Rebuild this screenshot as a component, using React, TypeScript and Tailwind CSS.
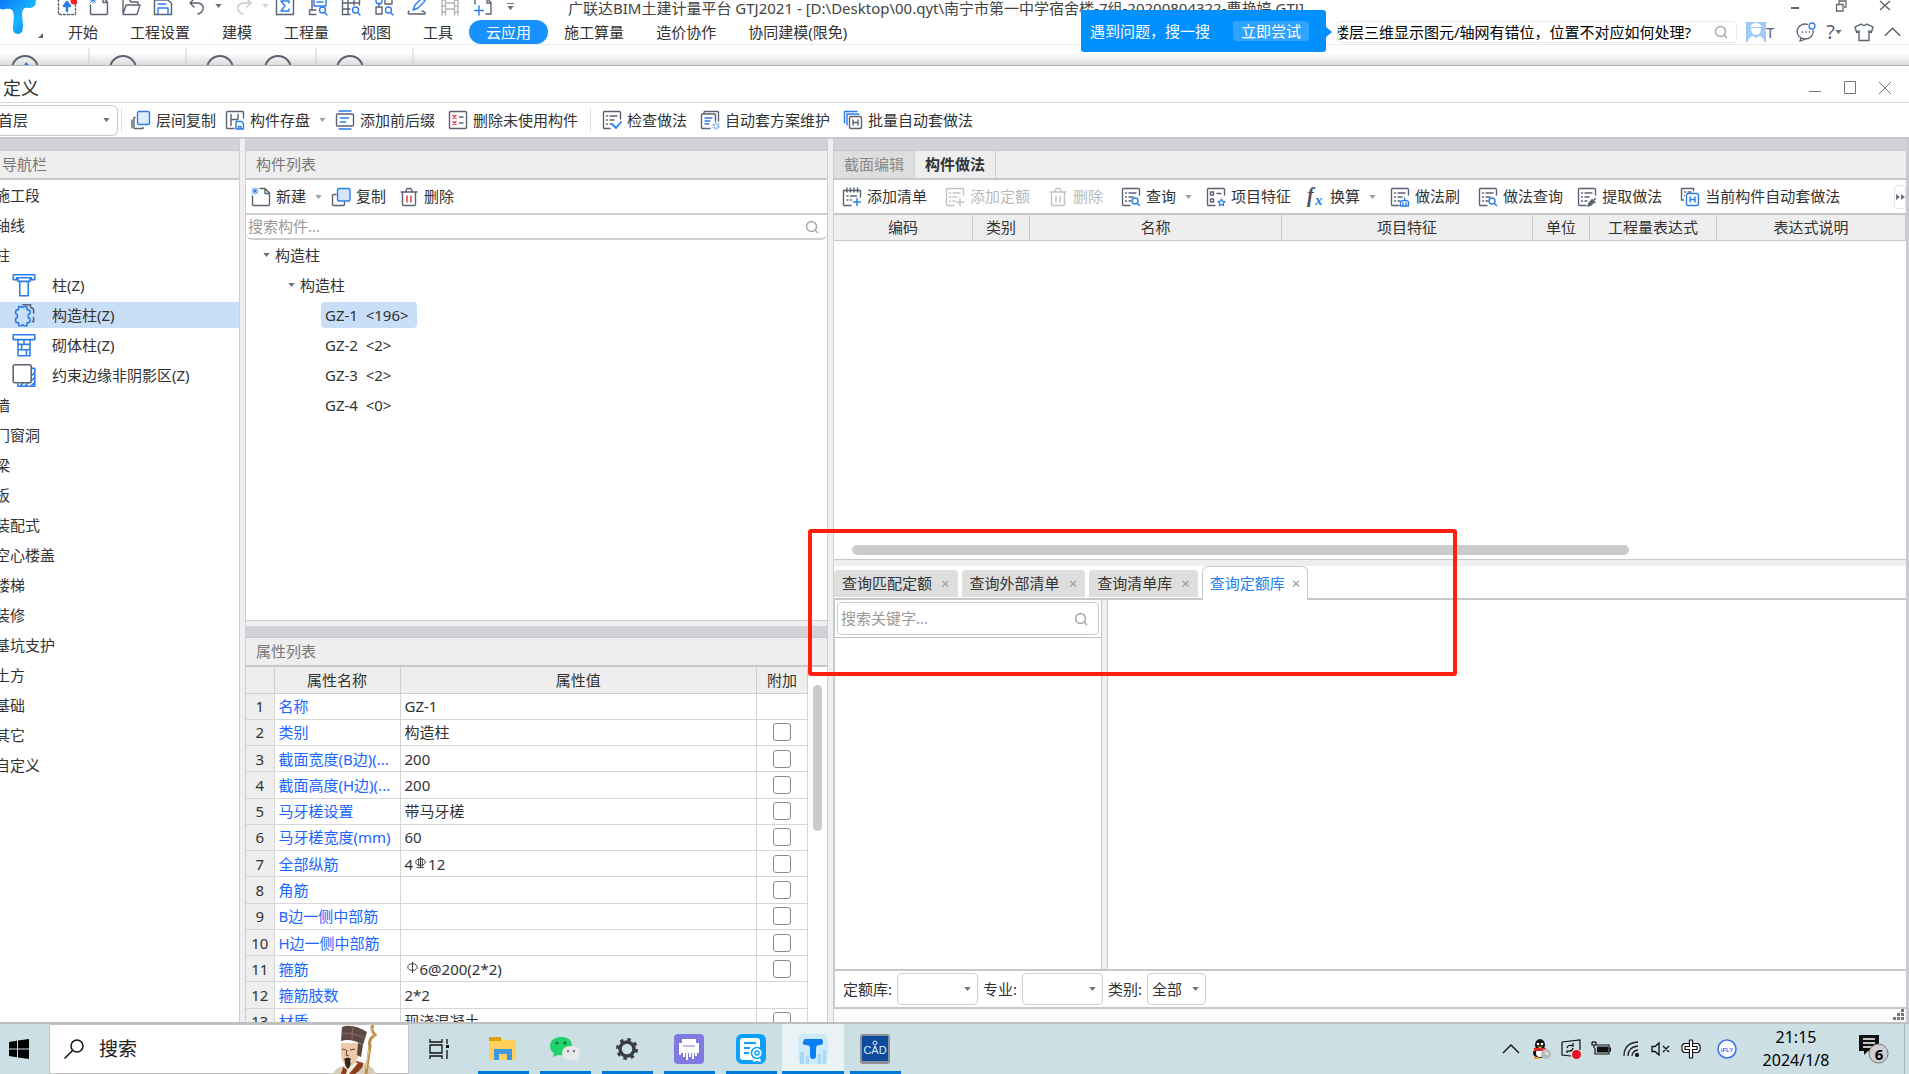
import React from "react";

const D = "#5b6272";
const B = "#2b7de9";

type P = { children: React.ReactNode; size?: string; stroke?: string; w?: number };
function Svg({ children, size = "size-5", stroke = D, w = 1.4 }: P) {
  return (
    <svg viewBox="0 0 20 20" className={`${size} shrink-0`} fill="none" stroke={stroke} strokeWidth={w} strokeLinecap="round" strokeLinejoin="round" aria-hidden="true">
      {children}
    </svg>
  );
}

const Lines = () => <path d="M4.500 6h1M8 6h7M4.500 10h1M8 10h4M4.500 14h1M8 14h2" />;
const Doc = () => <path d="M9 18.500H2.500a1 1 0 0 1-1-1v-15a1 1 0 0 1 1-1h15a1 1 0 0 1 1 1V8" />;

const icons = {
  layers: (
    <Svg>
      <path d="M4 7.500H3v10a1 1 0 0 0 1 1h8v-1M1 10v8" />
      <rect x="6.500" y="1.500" width="12" height="13" rx="1.500" fill="#deecfd" stroke={B} />
    </Svg>
  ),
  store: (
    <Svg>
      <Doc />
      <path d="M6 4.500v11M6 9.500h7M13 4.500v4" />
      <path d="M11 11.500h5.500l2 2v5.500H11zM13.500 19v-2.500h2.500V19" stroke={B} />
    </Svg>
  ),
  affix: (
    <Svg>
      <rect x="1.500" y="4" width="17" height="12" rx="1" />
      <path d="M4 1h12M4 19h12M5.500 8h8M5.500 12h5" stroke={B} />
    </Svg>
  ),
  purge: (
    <Svg>
      <rect x="1.500" y="1.500" width="17" height="17" rx="1" />
      <path d="m5 5.500 3 3m0-3-3 3M5 11.500l3 3m0-3-3 3" stroke="#e5343d" />
      <path d="M11.500 7H15M11.500 13H15" />
    </Svg>
  ),
  check: (
    <Svg>
      <path d="M8 18.500H2.500a1 1 0 0 1-1-1v-15a1 1 0 0 1 1-1h15a1 1 0 0 1 1 1V9" />
      <Lines />
      <path d="m10.500 14.500 3.500 3.500 5-6" stroke={B} strokeWidth="1.800" />
    </Svg>
  ),
  scheme: (
    <Svg>
      <path d="M4 4V2.500a1 1 0 0 1 1-1h12.500a1 1 0 0 1 1 1V11M10 18.500H2.500a1 1 0 0 1-1-1V5a1 1 0 0 1 1-1h12a1 1 0 0 1 1 1v6" />
      <path d="M5 8h7M5 11h5M5 14h4" stroke={B} />
      <circle cx="16" cy="16" r="2.500" stroke="#7fb1f5" strokeWidth="2.500" strokeDasharray="1.600 1" strokeLinecap="butt" />
    </Svg>
  ),
  batch: (
    <Svg>
      <path d="M1.500 13V1.500H14M4 15V4h12" stroke={B} />
      <rect x="6.500" y="6.500" width="12" height="12" rx="1.500" fill="#fff" />
      <path d="M10 10v5M15 10v5M10 12.500h5" />
    </Svg>
  ),
  current: (
    <Svg stroke={B}>
      <path d="M3.500 13h-2V1.500h12v2" stroke={D} />
      <path d="M4.500 5h1M8 5h3M4.500 8.500h0" stroke={D} />
      <rect x="6.500" y="6.500" width="12" height="12" rx="1.500" />
      <path d="M10 10v5M15 10v5M10 12.500h5" />
    </Svg>
  ),
  fresh: (
    <Svg>
      <path d="M1.500 9v8.500a1 1 0 0 0 1 1h15a1 1 0 0 0 1-1V6l-4.500-4.500H9M14 2v4.500h4" />
      <path d="m1.500 1.500 5 5m0-5-5 5M4 1v6M1 4h6" stroke={B} strokeWidth="1" />
    </Svg>
  ),
  copy: (
    <Svg>
      <path d="M5 7.500H2.500a1 1 0 0 0-1 1v9a1 1 0 0 0 1 1h10a1 1 0 0 0 1-1V15" />
      <rect x="6.500" y="1.500" width="12.500" height="12.500" rx="1.500" fill="#d6e6fb" stroke={B} />
    </Svg>
  ),
  trash: (
    <Svg>
      <path d="M2 5h16M6.500 5 8 1.500h4L13.500 5M3.500 5v12.500a1 1 0 0 0 1 1h11a1 1 0 0 0 1-1V5" />
      <path d="M8 9v6M12 9v6" stroke="#e5343d" />
    </Svg>
  ),
  trashOff: (
    <Svg stroke="#c3c3c3">
      <path d="M2 5h16M6.500 5 8 1.500h4L13.500 5M3.500 5v12.500a1 1 0 0 0 1 1h11a1 1 0 0 0 1-1V5" />
      <path d="M8 9v6M12 9v6" />
    </Svg>
  ),
  addList: (
    <Svg>
      <path d="M9 18.500H2.500a1 1 0 0 1-1-1V3.500h17V10M5 1v4M8.500 1v4M12 1v4M15.500 1v4M5 9h1M8.500 9h6M5 13h1M8.500 13h1" />
      <path d="M15 11.500v7M11.500 15h7" stroke={B} />
    </Svg>
  ),
  addQuota: (
    <Svg stroke="#c3c3c3">
      <Doc />
      <Lines />
      <path d="M15 11.500v7M11.500 15h7" />
    </Svg>
  ),
  query: (
    <Svg>
      <Doc />
      <Lines />
      <circle cx="14" cy="14" r="3" stroke={B} />
      <path d="m16.500 16.500 2 2" stroke={B} />
    </Svg>
  ),
  feature: (
    <Svg>
      <Doc />
      <path d="M4.500 5h3v3h-3zM4.500 12h3v3h-3zM11 6.500h4" />
      <path d="m15.500 12 1 2.200 2.500.3-1.800 1.700.4 2.500-2.100-1.200-2.100 1.200.4-2.500-1.800-1.700 2.500-.3z" stroke={B} strokeWidth="1.200" />
    </Svg>
  ),
  brush: (
    <Svg>
      <Doc />
      <Lines />
      <path d="M14.500 11v2.500M10.500 15.500a4 2 0 0 1 8 0V19h-8zM13 16v3M16 16v3" stroke={B} />
    </Svg>
  ),
  extract: (
    <Svg>
      <Doc />
      <Lines />
      <path d="m11 19 1-3 3-3 2 2-3 3zM15 12.500l3 3M16.500 13.500l2-2" fill={D} />
    </Svg>
  ),
};

function FxIcon() {
  return (
    <svg viewBox="0 0 20 20" className="size-5 shrink-0" fontFamily="Liberation Serif, serif" fontStyle="italic" fontWeight="700" aria-hidden="true">
      <text x="2" y="15" fontSize="20" fill="#4b5160">f</text>
      <text x="10" y="18" fontSize="15" fill={B}>x</text>
    </svg>
  );
}

function Caret({ cls = "text-gray-500" }: { cls?: string }) {
  return (
    <svg viewBox="0 0 8 5" className={`h-[4px] w-[7px] shrink-0 ${cls}`} fill="currentColor" aria-hidden="true">
      <path d="M0 0h8L4 5z" />
    </svg>
  );
}

function Tool({ icon, label, caret, off }: { icon: React.ReactNode; label: string; caret?: boolean; off?: boolean }) {
  return (
    <button disabled={off} className={`flex shrink-0 items-center gap-[5px] whitespace-nowrap ${off ? "text-[#b9b9b9]" : ""}`}>
      {icon}
      <span>{label}</span>
      {caret && <span className="ml-[4px]"><Caret cls="text-gray-400" /></span>}
    </button>
  );
}

function Mag({ cls = "size-[14px]" }: { cls?: string }) {
  return (
    <svg viewBox="0 0 14 14" className={`${cls} shrink-0 text-[#a8a8a8]`} fill="none" stroke="currentColor" strokeWidth="1.500" aria-hidden="true">
      <circle cx="6.500" cy="6.500" r="5" />
      <path d="m10 10 3 3" />
    </svg>
  );
}

function AppLogo() {
  return (
    <svg viewBox="0 0 48 44" className="h-11 w-12 shrink-0" aria-hidden="true">
      <defs>
        <linearGradient id="lg" x1="0" y1="0" x2="1" y2="1">
          <stop offset="0" stopColor="#0a6cf0" />
          <stop offset=".6" stopColor="#16b4ff" />
          <stop offset="1" stopColor="#0a7cf5" />
        </linearGradient>
      </defs>
      <path d="M-2-6h33q5 0 5 6 0 9-8 8-5-1-6 5l1 13q0 8-5 8-6 0-5-8 2-13-1-16-2-2-7-1-6 2-7-4z" fill="url(#lg)" />
      <path d="M43 33v5h-5z" fill="#666" />
    </svg>
  );
}

function QuickAccess() {
  return (
    <div className="-mt-1 flex items-center">
      <div className="flex gap-3 pl-[9px]">
        <Svg><path d="M1.500 1.500h17v17h-17z" strokeDasharray="2 2" /><path d="M10 15V9M7 10l3-4 3 4z" stroke={B} fill={B} strokeWidth="2.500" /><circle cx="17" cy="5" r="3.500" fill="#f5222d" stroke="none" /></Svg>
        {icons.fresh}
        <Svg><path d="M2 17V3h6l2 3h7v3M2 18.500 5 9h14l-3 9.500z" /></Svg>
        <Svg><path d="M1.500 4h13l4 3v11.500h-17z" /><path d="M5 18v-6h10v6M5 8h8" stroke={B} /></Svg>
      </div>
      <div className="flex items-center gap-2 pl-[14px]">
        <Svg><path d="M7 3 3 7l4 4M3 7h8q6 1 5 6-1 4-5 5" /></Svg>
        <Caret />
      </div>
      <div className="flex items-center gap-2 pl-3">
        <Svg stroke="#c8c8c8"><path d="m13 3 4 4-4 4M17 7H9q-6 1-5 6 1 4 5 5" /></Svg>
        <Caret cls="text-gray-300" />
      </div>
      <div className="flex gap-[13px] pl-[6px]">
        <Svg><path d="M1.500 1.500h17v17h-17z" /><path d="M14 7V5H6l4 5-4 5h8v-2" stroke={B} /></Svg>
        <Svg><path d="M4 1v13M1.500 14v4.500H8M1.500 14H8" /><path d="M6 2h12v8H6zM9 6h6" stroke={B} /><circle cx="14.500" cy="14" r="3" stroke={B} /><path d="m17 17 2 2" stroke={B} /></Svg>
        <Svg><path d="M1.500 1.500h17V9M1.500 1.500v17H9M1.500 7h17M1.500 13H9M7 1.500v17M13 1.500V9" /><circle cx="14.500" cy="14" r="3" stroke={B} /><path d="m17 17 2 2" stroke={B} /></Svg>
        <Svg><path d="M2 11h6v7H2zM11 3h7v5h-7zM5 11V7" /><circle cx="5" cy="5" r="3" stroke={B} /><circle cx="14.500" cy="14" r="3" stroke={B} /><path d="m17 17 2 2" stroke={B} /></Svg>
        <Svg><path d="M2 15q-2 3 1 3h15q1-2-3-3" /><path d="m6 14 2-5 7-7 3 3-7 7z" stroke={B} /></Svg>
        <Svg stroke="#b5b5b5"><path d="M2 1v18M18 1v18M5.500 1v18M14.500 1v18M5.500 7h9M5.500 13h9M2 4h3M2 10h3M2 16h3M15 4h3M15 10h3M15 16h3" /></Svg>
        <Svg><path d="M2 8V2h4M10 2h4l4 5v11h-5M14 2v5h4" /><path d="M6 10v9M1.500 14.500h9" stroke={B} /></Svg>
      </div>
      <div className="flex flex-col gap-[2px] pl-[14px] text-gray-500">
        <span className="h-px w-[7px] bg-gray-500" />
        <Caret />
      </div>
    </div>
  );
}

const menu = ["开始", "工程设置", "建模", "工程量", "视图", "工具", "云应用", "施工算量", "造价协作", "协同建模(限免)"];

function MainWindow() {
  return (
    <header className="relative shrink-0 bg-white">
      <div className="flex h-[45px] overflow-hidden border-b border-[#ececec]">
        <AppLogo />
        <div className="flex min-w-0 flex-1 flex-col">
          <div className="flex h-[21px] items-start">
            <QuickAccess />
            <h1 className="ml-[54px] text-[15px] leading-4 whitespace-nowrap text-[#444]">
              广联达BIM土建计量平台 GTJ2021 - [D:\Desktop\00.qyt\南宁市第一中学宿舍楼-7组-20200804322-曹艳婷.GTJ]
            </h1>
            <div className="ml-auto flex gap-8 pr-[18px] text-[#666]">
              <button aria-label="最小化" className="flex h-4 w-3 items-center"><span className="h-[2px] w-2 bg-[#666]" /></button>
              <button aria-label="还原"><svg viewBox="0 0 12 16" className="h-4 w-3" fill="none" stroke="currentColor" strokeWidth="1.300"><path d="M4 4V1h7v6H9M1.500 4.500H8v6.500H1.500z" /></svg></button>
              <button aria-label="关闭"><svg viewBox="0 0 12 16" className="h-4 w-3" fill="none" stroke="currentColor" strokeWidth="1.500"><path d="m1 1 10 9M11 1 1 10" /></svg></button>
            </div>
          </div>
          <nav className="flex h-6 items-center pl-1">
            {menu.map((m) => (
              <button key={m} className={`h-6 rounded-full leading-6 whitespace-nowrap ${m === "云应用" ? "bg-[#1890ff] px-[17px] text-white" : "px-4"}`}>{m}</button>
            ))}
            <div className="ml-auto flex items-center pr-2 text-[#5b6272]">
              <label className="flex h-[22px] w-[400px] items-center rounded-sm border border-[#e8e8e8] pr-2">
                <input aria-label="搜索帮助" className="min-w-0 flex-1 -indent-[4px] text-black outline-none" defaultValue="楼层三维显示图元/轴网有错位，位置不对应如何处理?" />
                <Mag />
              </label>
              <svg viewBox="0 0 20 20" className="ml-[9px] size-5" aria-hidden="true"><path d="M0 0h20v20H0z" fill="#9fcbfb" /><path d="M2 20q0-5 5-6l3 2 3-2q5 1 5 6zM5 6h10q0 7-5 7T5 6zM4 5q2-4 6-4t6 4z" fill="#fff" /></svg>
              <span>T</span>
              <svg viewBox="0 0 20 20" className="ml-[22px] size-5" fill="none" stroke={D} strokeWidth="1.300" aria-hidden="true"><path d="M12 2.500A8 7.500 0 1 0 17 8M5 16l-1 3 5-1.500" /><path d="M6 10h1M9.500 10h1M13 10h1" strokeWidth="1.800" /><circle cx="16" cy="4" r="3" stroke={B} /></svg>
              <span className="ml-[10px] text-[20px] leading-5">?</span>
              <Caret />
              <svg viewBox="0 0 20 20" className="ml-3 size-5" fill="none" stroke={D} strokeWidth="1.400" aria-hidden="true"><path d="M7 2q3 3 6 0l6 3-1.500 5-2.500-1v9.500H5V9L2.500 10 1 5z" /></svg>
              <svg viewBox="0 0 18 10" className="ml-[10px] h-[10px] w-[17px]" fill="none" stroke={D} strokeWidth="1.600" aria-hidden="true"><path d="m1 9 8-8 8 8" /></svg>
            </div>
          </nav>
        </div>
      </div>
      <div className="h-5 overflow-hidden bg-linear-to-b from-white from-40% to-[#dcdcdc]">
        <svg viewBox="0 0 430 20" className="h-5 w-[430px]" fill="none" aria-hidden="true">
          <path d="M89 3v17M186 3v17M316 3v17M413 3v17" stroke="#d0d0d0" />
          <g stroke={D} strokeWidth="2"><circle cx="25" cy="24" r="13" /><circle cx="123" cy="24" r="13" /><circle cx="220" cy="24" r="13" /><circle cx="278" cy="24" r="13" /><circle cx="350" cy="24" r="13" /></g>
          <path d="m24 20 2-3 3 3z" fill={B} />
        </svg>
      </div>
      <div className="absolute top-[10px] right-[583px] flex h-[42px] w-[245px] rounded-[3px] bg-[#0090ff] pt-[11px] pl-[9px] text-white">
        <span className="leading-5">遇到问题，搜一搜</span>
        <button className="ml-[23px] h-5 rounded-[3px] bg-[#2fa3ff] px-2 leading-5">立即尝试</button>
        <svg viewBox="0 0 7 12" className="absolute top-4 -right-[6px] h-3 w-[7px]" fill="#0090ff" aria-hidden="true"><path d="M0 0l7 6-7 6z" /></svg>
      </div>
    </header>
  );
}

function Splitter() {
  return <div className="w-[6px] shrink-0 border-r border-[#cfcfcf] bg-[#efefef]" />;
}

function PanelHead({ title, pad }: { title: string; pad: string }) {
  return (
    <>
      <div className="h-3 shrink-0 border-b border-[#c6c8cc] bg-[#d2d3d9]" />
      <h2 className={`h-[29px] shrink-0 border-b-2 border-[#c6c9cc] bg-[#eee] leading-[27px] text-[#777] ${pad}`}>{title}</h2>
    </>
  );
}

const navIcons = {
  col: <Svg size="size-6" stroke={B} w={1.3}><path d="M1 1.500h18v4h-3v-1.500H4v1.500H1zM5 4v3h10V4M6.500 7v12h7V7" /></Svg>,
  gz: <Svg size="size-6" stroke={B} w={1.3}><path d="M5.500 3h2.500q1 1.500 2 0h2.500v2.500q2.500 0 2.500 2v1.500q-1.500 0-1.500 2t1.500 2v2q0 1.500-2.500 1.500V19H10q-1-1.500-2 0H5.500v-2.500Q3 16.500 3 15v-2q1.500 0 1.500-2T3 9V7.500q0-2 2.500-2z" /><path d="M9 1.500h6.500V4q2.500 0 2.500 2v2.500M18 12v3.500h-1" stroke={D} /></Svg>,
  qt: <Svg size="size-6" stroke={B} w={1.3}><path d="M1 1.500h18v4H1zM5 5.500V19h10V5.500M5 9.500h10M5 14h10M10 5.500v4M8 9.500V14M12 14v5" /></Svg>,
  ys: <Svg size="size-6" stroke={B} w={1.3}><path d="M17 4.500h2v15H5v-2M19 8l-2 2M19 12l-2 2M19 16l-3 3M13 17l-2 2M9 17l-2 2" /><rect x="1" y="1.500" width="15" height="15" rx="1.500" stroke={D} fill="#fff" /></Svg>,
};

const navBefore = ["施工段", "轴线", "柱"];
const navAfter = ["墙", "门窗洞", "梁", "板", "装配式", "空心楼盖", "楼梯", "装修", "基坑支护", "土方", "基础", "其它", "自定义"];

function NavPanel() {
  return (
    <aside className="flex w-[240px] shrink-0 flex-col border-r border-[#cfcfcf] bg-white">
      <PanelHead title="导航栏" pad="pl-[2px]" />
      <ul className="overflow-hidden">
        {navBefore.map((n) => <li key={n} className="-ml-[5px] h-[30px] leading-[30px]">{n}</li>)}
        {([["col", "柱(Z)"], ["gz", "构造柱(Z)"], ["qt", "砌体柱(Z)"], ["ys", "约束边缘非阴影区(Z)"]] as const).map(([k, n]) => (
          <li key={k} className="py-[2px]">
            <div className={`flex h-[26px] items-center gap-4 pl-3 ${k === "gz" ? "bg-[#c9dff8]" : ""}`}>
              {navIcons[k]}
              {n}
            </div>
          </li>
        ))}
        {navAfter.map((n) => <li key={n} className="-ml-[5px] h-[30px] leading-[30px]">{n}</li>)}
      </ul>
    </aside>
  );
}

function Rebar({ ribbed }: { ribbed?: boolean }) {
  return (
    <svg viewBox="0 0 14 14" className="mx-px inline-block size-[13px] -translate-y-[3px]" fill="none" stroke="#333" aria-hidden="true">
      <ellipse cx="7" cy="6.500" rx="5" ry="3.500" />
      <path d={ribbed ? "M7 1v12M5 3v8M9 3v8M3 12.500h8" : "M7 1v12"} />
    </svg>
  );
}

const props: [string, React.ReactNode, boolean][] = [
  ["名称", "GZ-1", false],
  ["类别", "构造柱", true],
  ["截面宽度(B边)(...", "200", true],
  ["截面高度(H边)(...", "200", true],
  ["马牙槎设置", "带马牙槎", true],
  ["马牙槎宽度(mm)", "60", true],
  ["全部纵筋", <>4<Rebar ribbed />12</>, true],
  ["角筋", "", true],
  ["B边一侧中部筋", "", true],
  ["H边一侧中部筋", "", true],
  ["箍筋", <><Rebar />6@200(2*2)</>, true],
  ["箍筋肢数", "2*2", false],
  ["材质", "现浇混凝土", true],
];

function MiddlePanel() {
  return (
    <section className="flex w-[582px] shrink-0 flex-col border-r border-[#cfcfcf] bg-[#efefef]">
      <div className="flex h-[482px] shrink-0 flex-col border-b border-[#cfcfcf] bg-white">
        <PanelHead title="构件列表" pad="pl-[10px]" />
        <div className="flex h-[35px] shrink-0 items-center gap-[13px] border-b-2 border-[#cfcfcf] pl-[5px]">
          <Tool icon={icons.fresh} label="新建" caret />
          <span className="-ml-1"><Tool icon={icons.copy} label="复制" /></span>
          <Tool icon={icons.trash} label="删除" />
        </div>
        <label className="flex h-[25px] shrink-0 items-center rounded-md border-b-2 border-[#cfcfcf] pr-2 pl-[2px]">
          <input aria-label="搜索构件" placeholder="搜索构件..." className="flex-1 outline-none placeholder:text-[#999]" />
          <Mag />
        </label>
        <ul className="leading-[30px]">
          <li className="flex items-center gap-[3px] pl-[17px]"><Caret cls="text-gray-500" /><span className="pl-[2px]">构造柱</span></li>
          <li className="flex items-center gap-[3px] pl-[42px]"><Caret cls="text-gray-500" /><span className="pl-[2px]">构造柱</span></li>
          {["GZ-1  <196>", "GZ-2  <2>", "GZ-3  <2>", "GZ-4  <0>"].map((g, i) => (
            <li key={g} className="flex h-[30px] items-center pl-[75px]">
              <span className={`h-[26px] rounded-sm px-1 leading-[26px] whitespace-pre ${i === 0 ? "bg-[#c9dff8] pr-[8px]" : ""}`}>{g}</span>
            </li>
          ))}
        </ul>
      </div>
      <div className="mt-[5px] flex min-h-0 flex-1 flex-col bg-white">
        <PanelHead title="属性列表" pad="pl-[10px]" />
        <div className="flex min-h-0 flex-1 overflow-hidden">
          <div className="min-w-0 flex-1">
            <table className="h-[368px] w-full table-fixed border-collapse">
              <thead>
                <tr className="h-[26px] bg-[#eee]">
                  <th className="w-7 border border-t-0 border-l-0 border-[#cfcfcf]" aria-label="序号" />
                  <th className="w-[126px] border border-t-0 border-[#cfcfcf] p-0 font-normal">属性名称</th>
                  <th className="border border-t-0 border-[#cfcfcf] p-0 font-normal">属性值</th>
                  <th className="w-[51px] border border-t-0 border-[#cfcfcf] p-0 font-normal">附加</th>
                </tr>
              </thead>
              <tbody>
                {props.map(([n, v, c], i) => (
                  <tr key={n} className="leading-[22px]">
                    <td className="border border-l-0 border-[#d6d6d6] bg-[#eee] p-0 text-center">{i + 1}</td>
                    <td className="overflow-hidden border border-[#d6d6d6] p-0 pl-1 whitespace-nowrap text-[#1a66ff]">{n}</td>
                    <td className="border border-[#d6d6d6] p-0 pl-1">{v}</td>
                    <td className="border border-[#d6d6d6] p-0 text-center">
                      {c && <input type="checkbox" aria-label={`${n} 附加`} className="mx-auto block size-[18px] appearance-none rounded-[3px] border border-[#8c8c8c] bg-white" />}
                    </td>
                  </tr>
                ))}
              </tbody>
            </table>
          </div>
          <div className="w-[19px] shrink-0 px-[5px] pt-[18px]"><div className="h-[146px] rounded-full bg-[#cbcbcb]" /></div>
        </div>
      </div>
    </section>
  );
}

function Drop({ label, value, w }: { label: string; value: string; w: string }) {
  return (
    <label className="flex items-center gap-[5px]">
      {label}
      <span className={`relative flex h-8 items-center rounded border border-[#cfcfcf] ${w}`}>
        <select className="h-full w-full appearance-none pl-1 outline-none"><option>{value}</option></select>
        <span className="pointer-events-none absolute right-[6px]"><Caret /></span>
      </span>
    </label>
  );
}

function RightPanel() {
  const th = "border-r border-b border-[#c9c9c9] p-0 font-normal";
  return (
    <section className="relative flex min-w-0 flex-1 flex-col border-r-[3px] border-[#c9cbce] bg-white">
      <div className="h-3 shrink-0 border-b border-[#c6c8cc] bg-[#d2d3d9]" />
      <div className="flex h-[29px] shrink-0 border-b-2 border-[#c6c9cc] bg-[#eee] leading-[27px]" role="tablist">
        <button role="tab" className="border-r border-[#cfcfcf] bg-[#dedede] px-[10px] text-[#888]">截面编辑</button>
        <button role="tab" className="border-r border-[#cfcfcf] px-[10px] font-bold">构件做法</button>
      </div>
      <div className="flex h-[35px] shrink-0 items-center gap-[18px] border-b-2 border-[#c6c9cc] pl-2">
        <Tool icon={icons.addList} label="添加清单" />
        <Tool icon={icons.addQuota} label="添加定额" off />
        <Tool icon={icons.trashOff} label="删除" off />
        <Tool icon={icons.query} label="查询" caret />
        <span className="-ml-1"><Tool icon={icons.feature} label="项目特征" /></span>
        <span className="-ml-1"><Tool icon={<FxIcon />} label="换算" caret /></span>
        <span className="-ml-1"><Tool icon={icons.brush} label="做法刷" /></span>
        <Tool icon={icons.query} label="做法查询" />
        <span className="-ml-1"><Tool icon={icons.extract} label="提取做法" /></span>
        <Tool icon={icons.current} label="当前构件自动套做法" />
        <button aria-label="更多" className="ml-auto flex h-6 w-3 items-center justify-center rounded border border-[#e4e4e4] text-gray-500">
          <svg viewBox="0 0 9 6" className="h-[6px] w-[9px] shrink-0" fill="currentColor"><path d="M0 0l4 3-4 3zM5 0l4 3-4 3z" /></svg>
        </button>
      </div>
      <div className="flex h-[345px] shrink-0 flex-col justify-between border-b border-[#c6c9cc]">
        <table className="w-full table-fixed border-separate border-spacing-0">
          <thead>
            <tr className="h-[26px] bg-[#eee]">
              <th className={`w-[139px] ${th}`}>编码</th>
              <th className={`w-[57px] ${th}`}>类别</th>
              <th className={`w-[252px] ${th}`}>名称</th>
              <th className={`w-[251px] ${th}`}>项目特征</th>
              <th className={`w-[57px] ${th}`}>单位</th>
              <th className={`w-[127px] ${th}`}>工程量表达式</th>
              <th className={th}>表达式说明</th>
            </tr>
          </thead>
        </table>
        <div className="px-[18px] pb-1"><div className="h-[10px] w-[75%] rounded-full bg-[#cbcbcb]" /></div>
      </div>
      <div className="h-[6px] shrink-0 bg-[#efefef]" />
      <div className="flex h-[34px] shrink-0 items-end gap-1 border-b-2 border-[#c6c9cc]" role="tablist">
        {["查询匹配定额", "查询外部清单", "查询清单库"].map((t) => (
          <button key={t} role="tab" className="mb-px flex h-[27px] items-center gap-[9px] rounded-t bg-[#dedede] px-2">{t}<span className="text-[15px] text-[#999]">×</span></button>
        ))}
        <button role="tab" className="-mb-[2px] flex h-[34px] items-center gap-[7px] rounded-t-md border border-b-0 border-[#c6cad2] bg-white px-[7px] text-[#2080f0]">查询定额库<span className="text-[15px] text-[#999]">×</span></button>
      </div>
      <div className="flex min-h-0 flex-1 border-b-2 border-[#c6c6c6]">
        <div className="w-[267px] shrink-0 border-l border-[#c6c9cc]">
          <div className="border-b border-[#c0c0c0] p-[2px]">
            <label className="flex h-[33px] items-center rounded border border-[#c9c9c9] pr-[10px] pl-[3px]">
              <input aria-label="搜索关键字" placeholder="搜索关键字..." className="min-w-0 flex-1 outline-none placeholder:text-[#999]" />
              <Mag />
            </label>
          </div>
        </div>
        <div className="w-[7px] shrink-0 border-x border-[#c9c9c9] bg-[#efefef]" />
      </div>
      <div className="flex h-[36px] shrink-0 items-center gap-[5px] border-l border-[#c6c9cc] pl-2">
        <Drop label="定额库:" value="" w="w-[81px]" />
        <Drop label="专业:" value="" w="w-[81px]" />
        <Drop label="类别:" value="全部" w="w-[59px]" />
      </div>
      <div className="flex h-[15px] shrink-0 items-end justify-end border-t-2 border-[#c6c9cc] bg-[#fafbfb]">
        <svg viewBox="0 0 12 12" className="m-px size-3" fill="#777" aria-hidden="true"><path d="M8 0h3v3H8zM4 4h3v3H4zM8 4h3v3H8zM0 8h3v3H0zM4 8h3v3H4zM8 8h3v3H8z" /></svg>
      </div>
      <div className="pointer-events-none absolute top-[390px] -left-[26px] h-[147px] w-[649px] rounded-[3px] border-4 border-[#ff2012]" />
    </section>
  );
}

function DefineWindow() {
  return (
    <main className="flex min-h-0 flex-1 flex-col border-t border-b-2 border-t-[#b4b4b4] border-b-[#bdbfc1] bg-white">
      <div className="flex h-[37px] shrink-0 items-center border-b border-[#d3d5da] pr-[17px] pl-[3px]">
        <h2 className="flex-1 pt-2 text-[18px] leading-6">定义</h2>
        <div className="flex gap-[21px] pt-2 text-[#777]">
          <button aria-label="最小化"><svg viewBox="0 0 14 14" className="size-[14px]" stroke="currentColor"><path d="M1 10.500h12" /></svg></button>
          <button aria-label="最大化"><svg viewBox="0 0 14 14" className="size-[14px]" stroke="currentColor" fill="none"><path d="M1.500.5h11v12h-11z" /></svg></button>
          <button aria-label="关闭"><svg viewBox="0 0 14 14" className="size-[14px]" stroke="currentColor"><path d="m1 1 12 12M13 1 1 13" /></svg></button>
        </div>
      </div>
      <div className="flex h-9 shrink-0 items-center gap-[13px] overflow-hidden border-b-2 border-[#c6c9cc]">
        <span className="relative flex h-[31px] w-[118px] shrink-0 items-center rounded-r-md border border-l-0 border-[#c9c9c9]">
          <select aria-label="楼层" className="h-full w-full appearance-none -indent-[2px] outline-none"><option>首层</option></select>
          <span className="pointer-events-none absolute right-[7px]"><Caret /></span>
        </span>
        <span className="-mr-1 -ml-[10px] h-6 w-px bg-[#ddd]" />
        <Tool icon={icons.layers} label="层间复制" />
        <span className="-ml-1"><Tool icon={icons.store} label="构件存盘" caret /></span>
        <span className="-ml-1"><Tool icon={icons.affix} label="添加前后缀" /></span>
        <Tool icon={icons.purge} label="删除未使用构件" />
        <span className="-mr-[2px] -ml-px h-6 w-px bg-[#ddd]" />
        <Tool icon={icons.check} label="检查做法" />
        <Tool icon={icons.scheme} label="自动套方案维护" />
        <Tool icon={icons.batch} label="批量自动套做法" />
      </div>
      <div className="flex min-h-0 flex-1">
        <NavPanel />
        <Splitter />
        <MiddlePanel />
        <Splitter />
        <RightPanel />
      </div>
    </main>
  );
}

function Scholar() {
  return (
    <svg viewBox="0 0 44 49" className="h-[49px] w-11" aria-hidden="true">
      <path d="M0 49q2-6 10-8l18-4q12 3 15 12z" fill="#d9cdb9" />
      <path d="M8 49l2-7 4 3 10-9 6 2q1 5-8 11z" fill="#8c3f1c" />
      <path d="M14 45l7-8 4 1-9 11h-3z" fill="#f3ede2" />
      <path d="M8 18h19l-1 13q-3 9-10 10-7-2-8-10z" fill="#ecc9a8" />
      <path d="M25 18l5 2-2 12-4-2z" fill="#5a4740" />
      <path d="M11 34q4-3 7 0l-1 2q2 3-2 8-4-4-3-8z" fill="#33251f" />
      <path d="M9 24l4 1M17 25l5-1M14 25l-1 5 3 1" stroke="#5b3d2c" fill="none" />
      <path d="M9 2q10-4 25 5l-4 13Q18 13 8 16z" fill="#5d4843" />
      <path d="M20 1l-1 13M9 9q12-3 23 5" stroke="#7b655e" strokeWidth="1.500" fill="none" />
      <path d="M40 0q-3 5 2 10-7 4-5 11l-4 28" stroke="#b98f4a" strokeWidth="3" fill="none" />
      <path d="M39 3q-2 5 2 8M36 24l-3 20" stroke="#e6cd92" strokeWidth="1" fill="none" />
    </svg>
  );
}

const apps: { name: string; art: React.ReactNode; active?: boolean }[] = [
  { name: "文件资源管理器", art: <><path d="M1 4h12l2 2h13v20H1z" fill="#ffd05c" /><path d="M1 3h12v4H1z" fill="#e0a000" /><path d="M6 26V15h18v11h-5v-6h-8v6z" fill="#3f97dc" /></> },
  { name: "微信", art: <><path d="M11 3C4 3 0 7 0 12q0 5 4 7l-1 4 5-2q14 2 14-9 0-9-11-9z" fill="#1fd26b" /><circle cx="7" cy="9" r="1.500" fill="#0a6b35" /><circle cx="15" cy="9" r="1.500" fill="#0a6b35" /><path d="M21 12c-6 0-9 3-9 7 0 5 5 8 12 7l4 2-1-4q3-2 3-5c0-4-4-7-9-7z" fill="#e9e9e9" /><circle cx="18" cy="17" r="1.200" fill="#777" /><circle cx="24" cy="17" r="1.200" fill="#777" /></> },
  { name: "设置", art: <g fill="none" stroke="#3c4043"><circle cx="15" cy="15" r="7" strokeWidth="3.500" /><circle cx="15" cy="15" r="9.500" strokeWidth="3" strokeDasharray="3.500 3.960" /></g> },
  { name: "文件粉碎", art: <><rect width="30" height="30" rx="4" fill="#8079e0" /><path d="M8 5h14v4h3v10h-2v3h-2v-3h-1v6h-2v-6h-1v4h-2v-4h-1v7h-2v-7h-1v4H9v-4H7v2H5V9h3z" fill="#fff" /><path d="M9 12h12" stroke="#8079e0" /></> },
  { name: "授权管理", art: <><rect width="30" height="30" rx="6" fill="#0aa0fb" /><rect x="4" y="4" width="20" height="22" rx="3" fill="#fff" /><path d="M8 9h12M8 14h6M8 19h5" stroke="#0aa0fb" strokeWidth="2" /><path d="m18 23-1 5 4-1 4 1-1-5z" fill="#fff" /><circle cx="21" cy="19" r="5.500" fill="#fff" stroke="#0aa0fb" strokeWidth="1.500" /><circle cx="21" cy="19" r="2" fill="none" stroke="#0aa0fb" strokeWidth="1.500" /></> },
  { name: "广联达", active: true, art: <><rect width="30" height="30" rx="5" fill="#cdeafa" /><path d="M2 30V18h4v12M8 30V22h3v8M20 30V20h3v10M25 30V16h3v14" fill="#a8daf7" /><path d="M7 5h16q2 0 2 3t-3 3q-4 0-4 3v8q0 3-3 3t-3-3v-8q0-3-4-3T5 8t2-3z" fill="#0a7ff0" /></> },
  { name: "CAD", art: <><rect width="30" height="30" rx="3" fill="#8c8f94" /><rect x="2" y="2" width="26" height="25" rx="1" fill="#0d4c9c" /><text x="15" y="20" textAnchor="middle" fontSize="11" fill="#dfeaf7" fontFamily="Liberation Sans, sans-serif">CAD</text><circle cx="15" cy="9" r="2" fill="none" stroke="#dfeaf7" /></> },
];

function Taskbar() {
  const k = "#111";
  return (
    <footer className="flex h-[50px] shrink-0 bg-[#cbdfe5] text-black">
      <button aria-label="开始" className="flex w-[49px] shrink-0 items-center pl-[9px]">
        <svg viewBox="0 0 20 20" className="size-5"><path d="m0 3 8-1.200v7.700H0zM9 1.600 20 0v9.500H9zM0 10.500h8v7.700L0 17zM9 10.500h11V20L9 18.400z" /></svg>
      </button>
      <label className="flex w-[360px] shrink-0 items-center border border-[#c4c4c4] bg-white pl-[14px]">
        <svg viewBox="0 0 20 20" className="size-5 shrink-0" fill="none" stroke={k} strokeWidth="1.500"><circle cx="13" cy="7" r="6" /><path d="m8.500 11.500-8 8" /></svg>
        <input aria-label="搜索" placeholder="搜索" className="min-w-0 flex-1 pl-[15px] text-[19px] outline-none placeholder:text-[#222]" />
        <span className="mr-[31px]"><Scholar /></span>
      </label>
      <button aria-label="任务视图" className="flex w-[63px] shrink-0 items-center justify-center pr-[3px]">
        <svg viewBox="0 0 20 20" className="size-5" fill="none" stroke={k} strokeWidth="1.300"><path d="M1 0v3h12V0M1 20v-3h12v3M1 6h12v8H1zM18 0v5M18 11v9" /><path d="M17 6h3v3h-3z" fill={k} stroke="none" /></svg>
      </button>
      {apps.map((a) => (
        <button key={a.name} aria-label={a.name} className={`flex w-[62px] shrink-0 flex-col items-center justify-end ${a.active ? "bg-[#e9f2f5]" : ""}`}>
          <svg viewBox="0 0 30 30" className="mb-[7px] size-[30px]" aria-hidden="true">{a.art}</svg>
          <span className={`h-[3px] bg-[#0078d7] ${a.active ? "w-full" : "w-[51px]"}`} />
        </button>
      ))}
      <div className="ml-auto flex items-center">
        <div className="flex items-center gap-[10px]">
          <svg viewBox="0 0 20 20" className="size-5" fill="none" stroke={k} strokeWidth="1.400"><path d="m2 14 8-8 8 8" /></svg>
          <svg viewBox="0 0 20 20" className="size-5"><ellipse cx="9" cy="14" rx="7" ry="5" fill="#111" /><ellipse cx="9" cy="6" rx="5" ry="6" fill="#111" /><ellipse cx="9" cy="14" rx="4" ry="4" fill="#fff" /><path d="M3 9h12v3H3z" fill="#e02a2a" /><circle cx="7" cy="5" r="1.300" fill="#fff" /><circle cx="11" cy="5" r="1.300" fill="#fff" /><path d="M6 7.500h6l-3 2zM3 18h5v2H3z" fill="#f3a11a" /><circle cx="15" cy="15" r="5" fill="#b9b9b9" /><path d="M15 12v3h3" stroke="#fff" fill="none" /></svg>
          <svg viewBox="0 0 20 20" className="size-5" fill="none" stroke={k} strokeWidth="1.200"><path d="M1 3 19 1v10M1 3v13l9 1M6 9q1-4 6-2V4M12 9q-1 4-6 3v2" /><circle cx="15.500" cy="15.500" r="4.500" fill="#e81123" stroke="none" /></svg>
          <svg viewBox="0 0 20 20" className="size-5" fill="none" stroke={k} strokeWidth="1.200"><path d="M5 6h13v9H4V9M18 9h1.500v3H18M1 3v3h4V3M2 2v2M4 2v2M3 6v3" /><path d="M6.500 8h10v5h-10z" fill={k} /></svg>
          <svg viewBox="0 0 20 20" className="size-5" fill="none" stroke="#222" strokeWidth="1.300"><path d="M3 17Q3 4 17 3M7 17Q7 8 17 7M11 17q0-5 6-6" /><circle cx="16" cy="16" r="1.500" fill={k} /></svg>
          <svg viewBox="0 0 20 20" className="size-5" fill="none" stroke={k} strokeWidth="1.300"><path d="M1 7.500h3L8 4v12l-4-3.500H1zM12 7l6 6M18 7l-6 6" /></svg>
          <svg viewBox="0 0 20 20" className="size-5" fill="none" strokeLinejoin="round"><path d="M3 4.500h14l2 2v5l-2 2H3l-2-2v-5z" fill="#fff" stroke="#111" strokeWidth="1.200" /><path d="M8.500 1h3v18h-3z" fill="#fff" stroke="#111" strokeWidth="1.200" /><path d="M4 7.500h12v3H4z" stroke="#111" strokeWidth="1.200" fill="#fff" /><path d="M10 2v16" stroke="#fff" strokeWidth="1.800" /></svg>
        </div>
        <svg viewBox="0 0 20 20" className="ml-4 size-5"><circle cx="10" cy="10" r="9" fill="#fff" stroke="#3c6df0" strokeWidth="1.500" /><text x="10" y="12.500" textAnchor="middle" fontSize="6" fontWeight="700" fill="#3c6df0" fontFamily="Liberation Sans, sans-serif">iFLY</text></svg>
        <time className="ml-5 w-[78px] text-center text-[16px] leading-[23px] whitespace-nowrap">21:15<br />2024/1/8</time>
        <button aria-label="通知" className="relative mr-[15px] ml-6 h-[30px] w-[30px]">
          <svg viewBox="0 0 30 30" className="size-[30px]"><path d="M0 1h20v16H9l-4 4v-4H0z" fill="#111" /><path d="M4 5h12M4 9h12M4 13h9" stroke="#fff" strokeWidth="1.500" /><circle cx="19.500" cy="19.500" r="9.500" fill="#cfcfd1" stroke="#777" /></svg>
          <span className="absolute top-[10px] left-[10px] w-5 text-center text-[15px] leading-5 font-bold">6</span>
        </button>
        <span className="mr-1 h-[50px] w-px bg-[#9fb3ba]" />
      </div>
    </footer>
  );
}

export default function App() {
  return (
    <div className="flex h-screen w-full flex-col overflow-hidden bg-white font-['Noto_Sans','Noto_Sans_CJK_SC',sans-serif] text-[15px] text-[#333]">
      <MainWindow />
      <DefineWindow />
      <Taskbar />
    </div>
  );
}
